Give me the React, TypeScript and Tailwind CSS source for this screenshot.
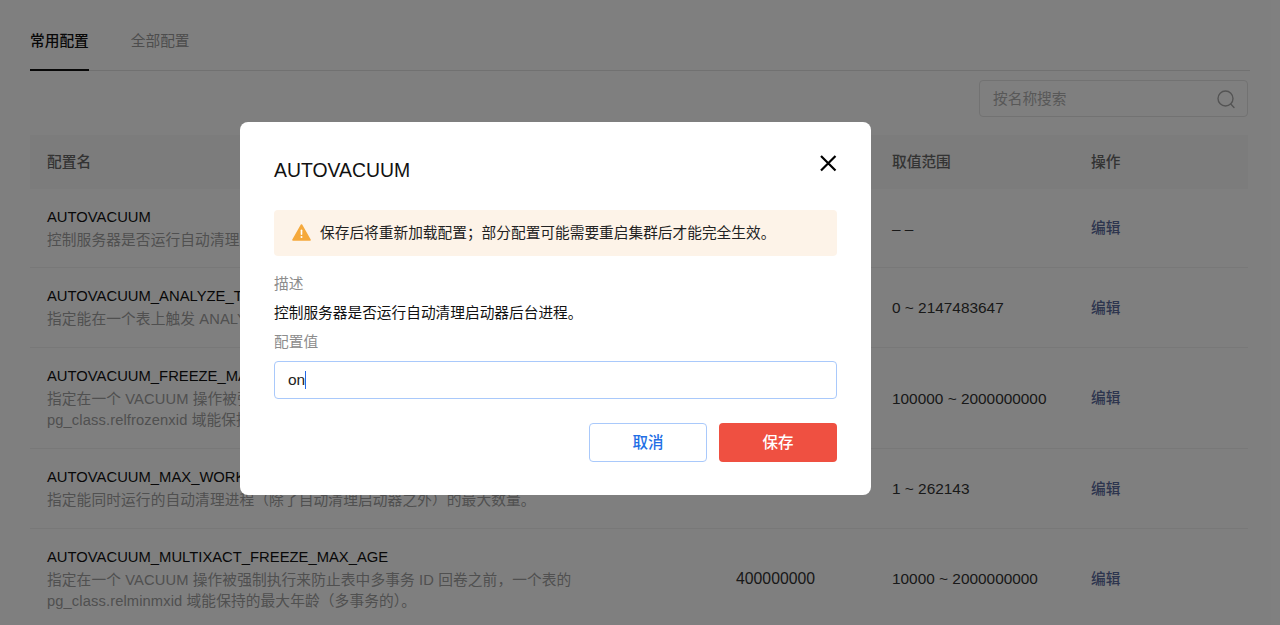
const font = "font-['Liberation_Sans','Noto_Sans_CJK_SC',sans-serif]"

// only values that show around the dialog are filled in
const rows = [
    {
        name: "AUTOVACUUM",
        desc: ["控制服务器是否运行自动清理启动器后台进程。"],
        value: "",
        range: "– –",
        height: "h-[79px]",
    },
    {
        name: "AUTOVACUUM_ANALYZE_THRESHOLD",
        desc: ["指定能在一个表上触发 ANALYZE 的最小插入、更新或删除元组数。"],
        value: "",
        range: "0 ~ 2147483647",
        height: "h-[80px]",
    },
    {
        name: "AUTOVACUUM_FREEZE_MAX_AGE",
        desc: [
            "指定在一个 VACUUM 操作被强制执行来防止表中事务 ID 回卷之前\uFF0C一个表的",
            "pg_class.relfrozenxid 域能保持的最大年龄\uFF08事务的\uFF09。",
        ],
        value: "",
        range: "100000 ~ 2000000000",
        height: "h-[101px]",
    },
    {
        name: "AUTOVACUUM_MAX_WORKERS",
        desc: ["指定能同时运行的自动清理进程\uFF08除了自动清理启动器之外\uFF09的最大数量。"],
        value: "",
        range: "1 ~ 262143",
        height: "h-[80px]",
    },
    {
        name: "AUTOVACUUM_MULTIXACT_FREEZE_MAX_AGE",
        desc: [
            "指定在一个 VACUUM 操作被强制执行来防止表中多事务 ID 回卷之前\uFF0C一个表的",
            "pg_class.relminmxid 域能保持的最大年龄\uFF08多事务的\uFF09。",
        ],
        value: "400000000",
        range: "10000 ~ 2000000000",
        height: "h-[100px]",
    },
]

const Tabs = () => (
    <div className="flex gap-[42px] h-[42px] border-b border-[#e2e2e2]">
        <div className="h-[42px] pt-[1px] leading-[22px] font-medium text-[#111] border-b-2 border-[#111]">
            常用配置
        </div>
        <div className="pt-[1px] leading-[22px] text-[#9a9a9a]">全部配置</div>
    </div>
)

const SearchBox = () => (
    <div className="flex justify-end mt-[9px] mr-[2px]">
        <div className="flex items-center justify-between w-[269px] h-[37px] pl-[13px] pr-[11px] border border-[#e4e4e4] rounded bg-white text-[#b0b0b0]">
            <span className="mt-[1px]">按名称搜索</span>
            <svg width="20" height="20" viewBox="0 0 20 20" fill="none" stroke="#a8a8a8" strokeWidth="1.4">
                <circle cx="9.5" cy="9.5" r="7.5" />
                <path d="M14.8 15l3.2 3.5" strokeLinecap="round" />
            </svg>
        </div>
    </div>
)

const Table = () => (
    <div className="mt-[18px] mr-[2px]">
        <div className="flex items-center h-[54px] pl-[17px] bg-[#f8f8f8] font-medium text-[#666]">
            <div className="w-[689px]">配置名</div>
            <div className="w-[156px]">配置值</div>
            <div className="w-[199px]">取值范围</div>
            <div>操作</div>
        </div>
        {rows.map(row => (
            <div key={row.name} className={`flex items-center pl-[17px] border-b border-[#f0f0f0] ${row.height}`}>
                <div className="w-[689px]">
                    <div className="text-[14.8px] leading-[22px] text-[#111]">{row.name}</div>
                    <div className="mt-[2px] leading-[21px] tracking-[0.12px] text-[#a0a0a0] whitespace-nowrap">
                        {row.desc.map(line => (
                            <div key={line}>{line}</div>
                        ))}
                    </div>
                </div>
                <div className="w-[156px] mt-[1px] text-[15.8px] text-[#333]">{row.value}</div>
                <div className="w-[199px] mt-[1px] text-[15.4px] text-[#333]">{row.range}</div>
                <div className="mt-[1px] font-medium text-[#5a6a9c]">编辑</div>
            </div>
        ))}
    </div>
)

const Modal = () => (
    <div className="w-[631px] h-[373px] ml-[240px] mt-[122px] px-[34px] pt-[35px] bg-white rounded-lg">
        <div className="flex items-center justify-between h-[26px]">
            <h2 className="text-[19.4px] leading-[26px] text-[#111]">AUTOVACUUM</h2>
            <svg className="mt-[-15px]" width="18" height="18" viewBox="0 0 18 18" fill="none" stroke="#000" strokeWidth="2.2">
                <path d="M2 2l14.5 14.5M16.5 2L2 16.5" />
            </svg>
        </div>
        <div className="flex items-center h-[46px] mt-[27px] pl-[18px] bg-[#fdf3e8] rounded text-[#222]">
            <svg className="mt-[-1px]" width="19" height="17" viewBox="0 0 19 17">
                <path
                    d="M9.5 1L18 16H1z"
                    fill="#f5a93c"
                    stroke="#f5a93c"
                    strokeWidth="1.6"
                    strokeLinejoin="round"
                />
                <rect x="8.7" y="5.5" width="1.6" height="5.5" rx="0.8" fill="#fff" />
                <circle cx="9.5" cy="13" r="1" fill="#fff" />
            </svg>
            <span className="ml-[9px] mt-[1px]">{"保存后将重新加载配置\uFF1B部分配置可能需要重启集群后才能完全生效。"}</span>
        </div>
        <div className="mt-[17px] leading-[22px] text-[#8c8c8c]">描述</div>
        <div className="mt-[7px] leading-[22px] text-[#111]">控制服务器是否运行自动清理启动器后台进程。</div>
        <div className="mt-[7px] leading-[22px] text-[#8c8c8c]">配置值</div>
        <div className="flex items-center h-[38px] mt-[8px] px-[13px] border-[1.5px] border-[#a9c9fb] rounded text-[15.5px] text-[#222]">
            <span>on</span>
            <span className="w-px h-[18px] bg-[#2468e5]" />
        </div>
        <div className="flex justify-end gap-3 mt-[24px]">
            <button className="w-[118px] h-[39px] border-[1.5px] border-[#a9c9fb] rounded font-medium text-[15.5px] text-[#1f6fe5]">
                取消
            </button>
            <button className="w-[118px] h-[39px] rounded bg-[#ef5041] font-medium text-[15.5px] text-white">
                保存
            </button>
        </div>
    </div>
)

const App = () => (
    <div className={`relative w-[1280px] h-[625px] overflow-hidden bg-white text-[14.7px] ${font}`}>
        <div className="pt-[29px] pl-[30px] pr-[30px]">
            <Tabs />
            <SearchBox />
            <Table />
        </div>
        <div className="absolute inset-0 flex items-start bg-black/50">
            <Modal />
        </div>
    </div>
)

export default App
